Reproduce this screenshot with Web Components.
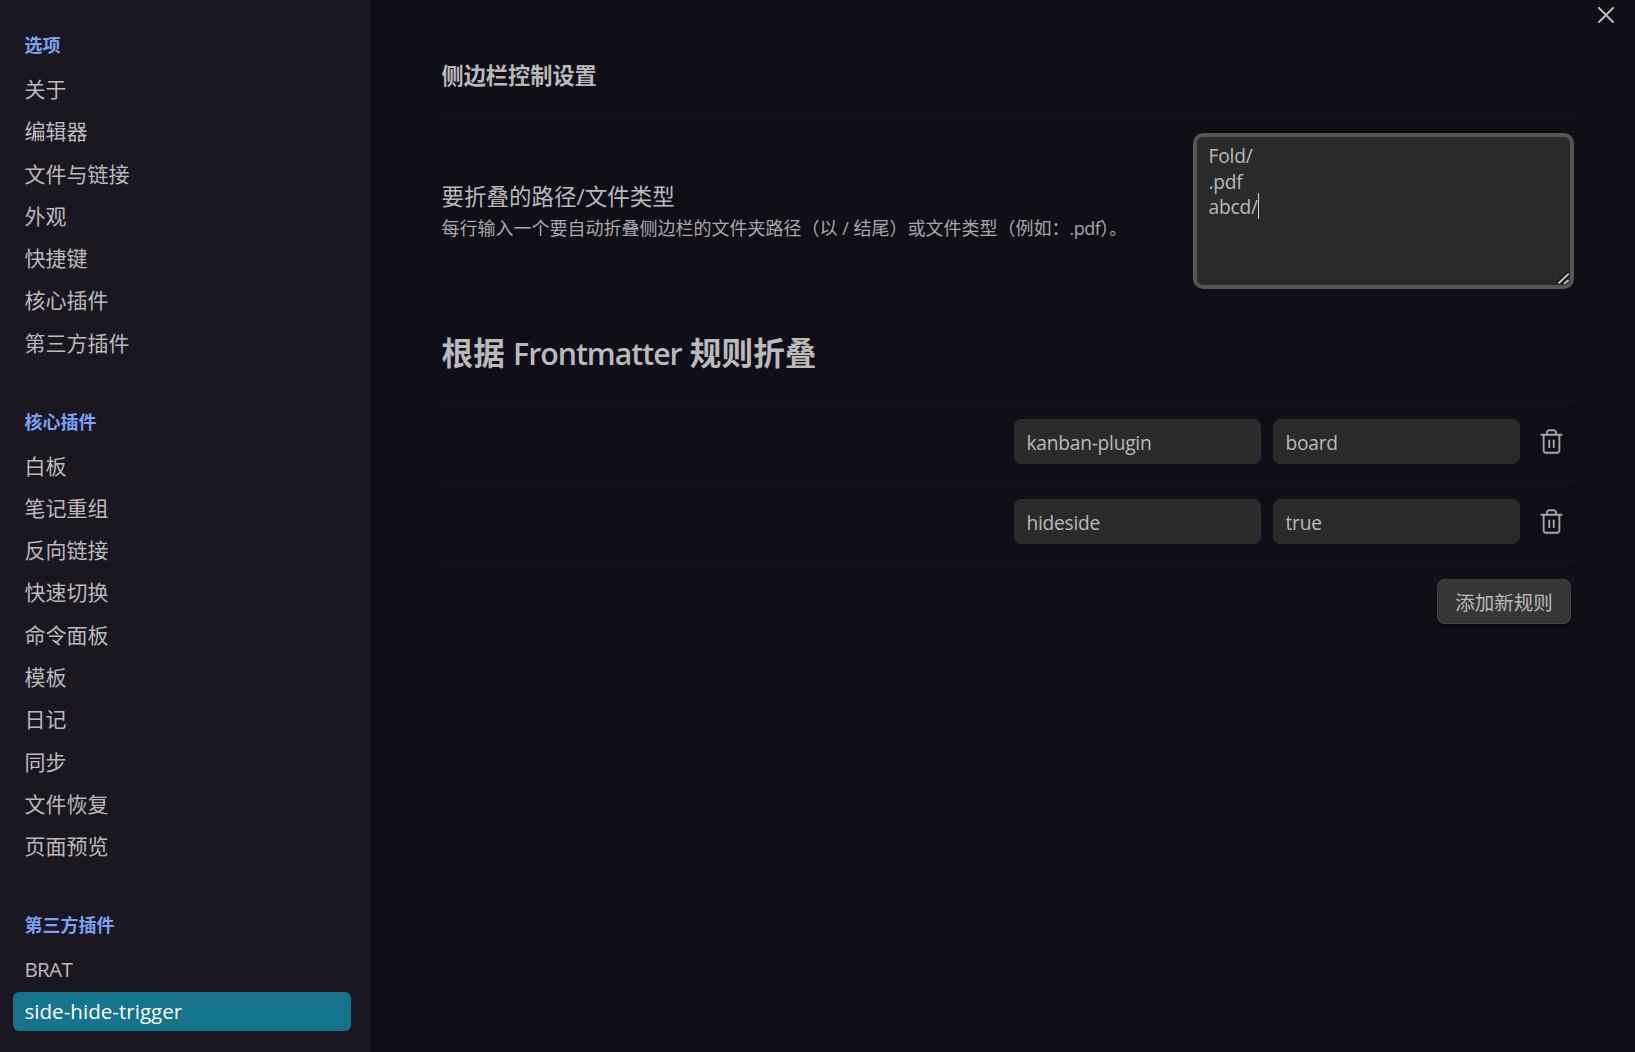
<!DOCTYPE html>
<html lang="zh-CN">
<head>
<meta charset="utf-8">
<title>侧边栏控制设置</title>
<style>
html,body{margin:0;height:100%}
body{background:#100e17;color:#bababa;font-family:"Open Sans","Noto Sans CJK SC",sans-serif;overflow:hidden}
</style>
</head>
<body>
<settings-app></settings-app>
<script>
function define(name, html, setup){
  const t=document.createElement('template');t.innerHTML=html;
  customElements.define(name,class extends HTMLElement{
    constructor(){super();this.attachShadow({mode:'open'}).append(t.content.cloneNode(true));}
    connectedCallback(){if(setup)setup(this,this.shadowRoot);}
  });
}
define('nav-item',`<style>
:host{display:flex;align-items:center;height:39px;margin-bottom:3.3px;padding-left:11.500px;border-radius:6px;font-size:21px;line-height:39px;white-space:nowrap}
:host([latin]){font-size:20.6px;letter-spacing:var(--track,0)}
:host([active]){background:#15738b;color:#fff}
</style><slot></slot>`);
define('nav-group',`<style>
:host{display:block;margin-bottom:37.8px}
h2{margin:0;padding-left:11.500px;height:46px;line-height:42.6px;font-size:18px;font-weight:700;color:#7aa2f7}
</style><h2></h2><slot></slot>`,(el,r)=>{r.querySelector('h2').textContent=el.getAttribute('label');});
define('side-nav',`<style>
:host{display:block;box-sizing:border-box;width:370px;height:1052px;padding:24px 18px 0 13px;background:#1a1720;border-right:1px solid #1c1d2a;overflow:hidden}
</style><slot></slot>`);
define('setting-row',`<style>
:host{display:flex;align-items:center;justify-content:flex-end;box-sizing:border-box;height:80px;border-top:1px solid #111823;gap:12px}
</style><slot></slot>`);
define('text-field',`<style>
:host{display:block;box-sizing:border-box;width:247px;height:45px;border:1px solid #263033;border-radius:7px;background:#2a2a2a;padding-left:11.500px;font-size:19.2px;line-height:45px;letter-spacing:-.25px}
</style><slot></slot>`);
define('trash-button',`<style>
:host{display:flex;width:39px;height:45px;align-items:center;justify-content:center}
svg{display:block;width:27px;height:27px;color:#a6a6a6}
</style><svg viewBox="0 0 24 24" fill="none" stroke="currentColor" stroke-width="1.700" stroke-linecap="round" stroke-linejoin="round"><path d="M3 6h18M19 6v14c0 1-1 2-2 2H7c-1 0-2-1-2-2V6M8 6V4c0-1 1-2 2-2h4c1 0 2 1 2 2v2M10 11v6M14 11v6"/></svg>`);
define('add-button',`<style>
:host{display:block;box-sizing:border-box;width:134px;height:45px;border-radius:7px;background:#363636;border:1px solid #424242;box-shadow:0 2px 3px rgba(0,0,0,.35);text-align:center;font-size:19.5px;line-height:45px}
</style><slot></slot>`);
define('path-area',`<style>
:host{position:relative;display:block;box-sizing:border-box;width:381px;height:156px;border:4px solid #555;border-radius:10px;background:#2a2a2a;padding:6px 11.500px;font-size:19.2px;line-height:25.5px;letter-spacing:-.22px}
::slotted(div){height:25.5px;white-space:nowrap}
i{position:absolute;left:61px;top:56px;width:1px;height:26px;background:#d0d0d0}
svg{position:absolute;right:1px;bottom:0;width:13px;height:13px}
</style><slot></slot><i></i><svg viewBox="0 0 13 13" fill="none"><path d="M1.500 11.800 12.600 1.200M7.200 12.200 12.600 7.200" stroke="#0a0a0a" stroke-width="4"/><path d="M2.300 11.500 12.600 1.700M8 12 12.600 7.900" stroke="#c8c8c8" stroke-width="1.900"/></svg>`);
define('close-button',`<style>
:host{position:absolute;right:21px;top:7px;width:16px;height:16px}
svg{display:block}
</style><svg width="16" height="16" fill="none" stroke="#bababa" stroke-width="2" stroke-linecap="round"><path d="M1 1l14 14M15 1L1 15"/></svg>`);
define('settings-app',`<style>
:host{display:flex;height:1052px}
main{flex:1;position:relative;padding:0 64px 0 72px}
h3{margin:0;padding-top:52px;height:66px;line-height:47px;font-size:22.2px;font-weight:700;text-indent:-.5px}
.area{display:flex;justify-content:space-between;border-top:1px solid #111823;padding-top:14px;margin-right:-3px;height:174px}
.info{padding-top:49px;text-indent:-.5px}
.name{font-size:22.5px;line-height:29px;height:30px}
.desc{font-size:18px;line-height:32px;color:#a9a9a9;white-space:nowrap}
.desc span{letter-spacing:-.5px}
h1{margin:0;height:94px;line-height:92px;font-size:31.67px;font-weight:700;white-space:nowrap;text-indent:-.5px}
h1 span{font-weight:600;font-size:30.3px;letter-spacing:-1.03px}
</style>
<side-nav>
<nav-group label="选项"><nav-item>关于</nav-item><nav-item>编辑器</nav-item><nav-item>文件与链接</nav-item><nav-item>外观</nav-item><nav-item>快捷键</nav-item><nav-item>核心插件</nav-item><nav-item>第三方插件</nav-item></nav-group>
<nav-group label="核心插件"><nav-item>白板</nav-item><nav-item>笔记重组</nav-item><nav-item>反向链接</nav-item><nav-item>快速切换</nav-item><nav-item>命令面板</nav-item><nav-item>模板</nav-item><nav-item>日记</nav-item><nav-item>同步</nav-item><nav-item>文件恢复</nav-item><nav-item>页面预览</nav-item></nav-group>
<nav-group label="第三方插件"><nav-item latin style="--track:-.7px">BRAT</nav-item><nav-item latin active>side-hide-trigger</nav-item></nav-group>
</side-nav>
<main>
<h3>侧边栏控制设置</h3>
<div class="area"><div class="info"><div class="name">要折叠的路径/文件类型</div><div class="desc">每行输入一个要自动折叠侧边栏的文件夹路径（以 / 结尾）或文件类型（例如：<span>.pdf</span>）。</div></div>
<path-area><div>Fold/</div><div>.pdf</div><div>abcd/</div></path-area></div>
<h1>根据 <span>Frontmatter</span> 规则折叠</h1>
<setting-row><text-field>kanban-plugin</text-field><text-field>board</text-field><trash-button></trash-button></setting-row>
<setting-row><text-field>hideside</text-field><text-field>true</text-field><trash-button></trash-button></setting-row>
<setting-row><add-button>添加新规则</add-button></setting-row>
<close-button></close-button>
</main>`);
</script>
</body>
</html>
